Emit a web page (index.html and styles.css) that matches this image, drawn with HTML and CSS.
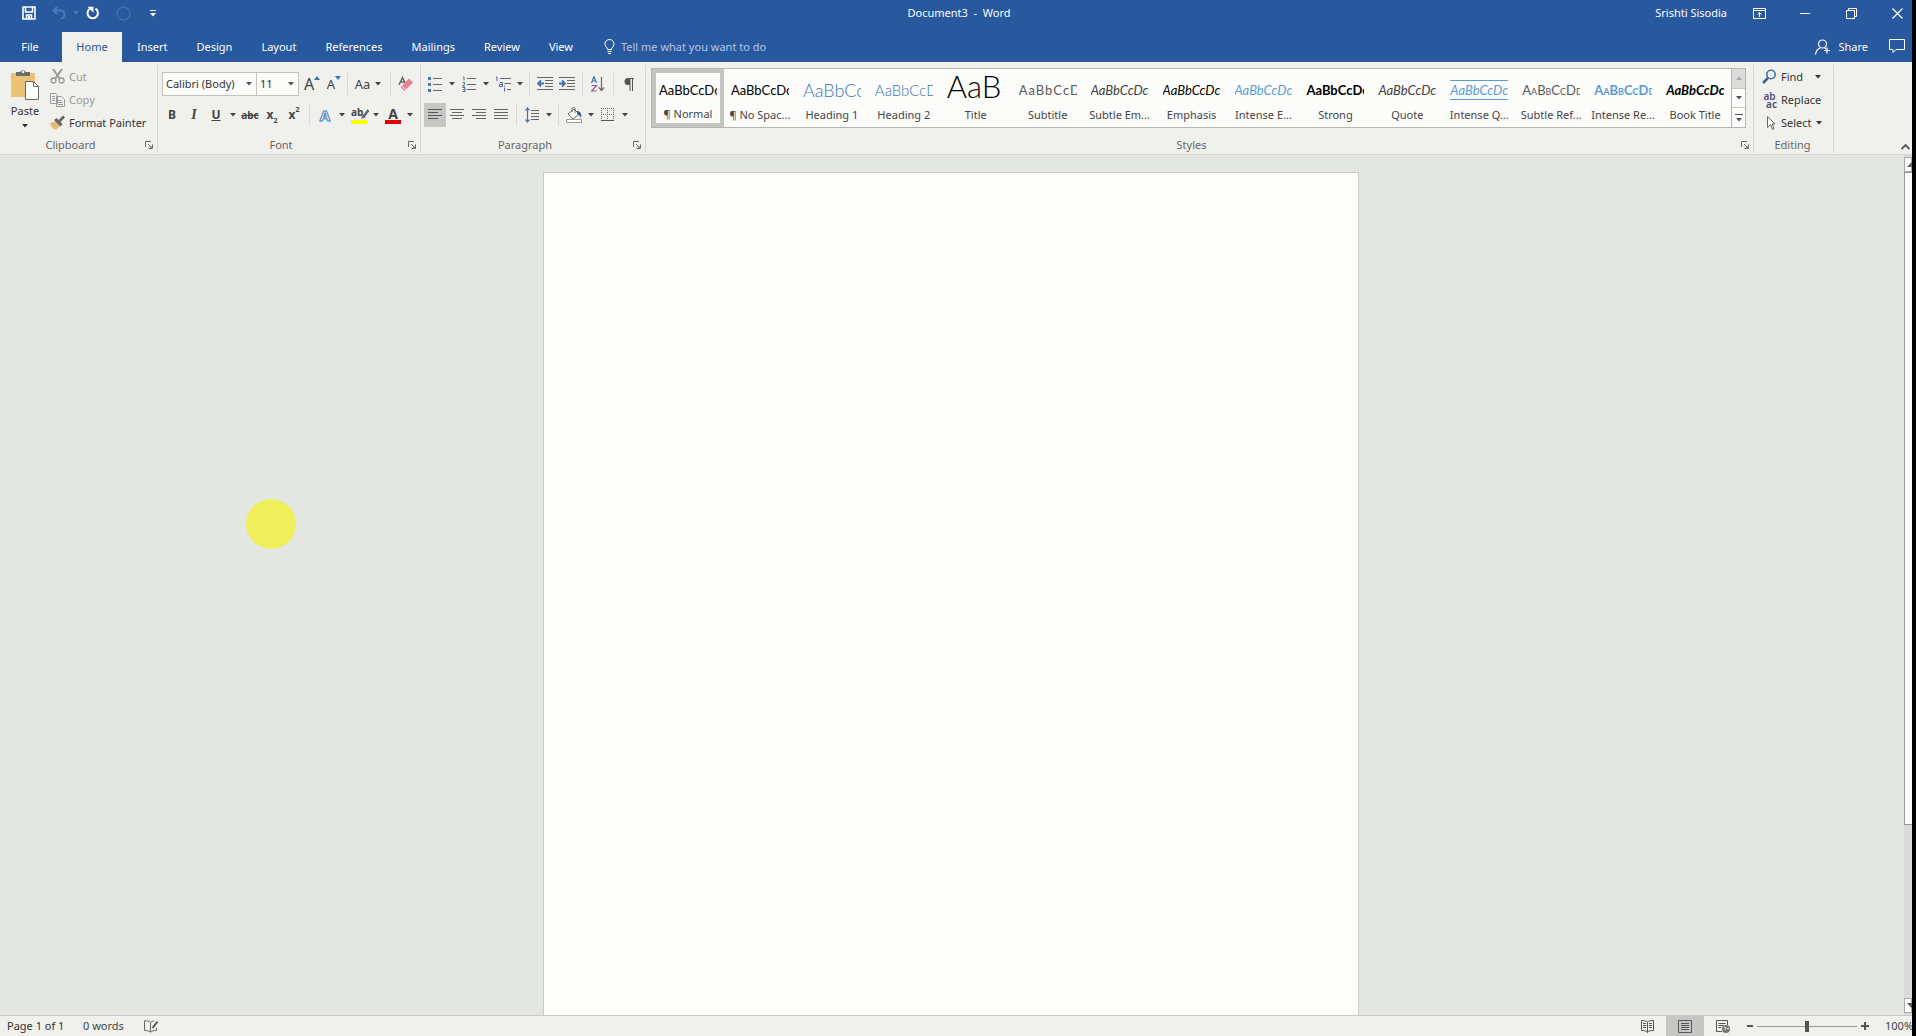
FILE: index.html
```html
<!DOCTYPE html>
<html lang="en">
<head>
<meta charset="utf-8">
<title>Document3 - Word</title>
<link rel="stylesheet" href="styles.css">
</head>
<body>
<svg class="defs" aria-hidden="true">
  <symbol id="launch" viewBox="0 0 8 8"><path d="M.5 6V.5H6M3 3l3 3M7.500 3.500v4h-4M5 7h2V5" fill="none" stroke="#666"/></symbol>
  <symbol id="down" viewBox="0 0 6 4"><path d="M0 0h6L3 3.500z" fill="currentColor"/></symbol>
</svg>
<header class="top">
  <div class="titlebar">
    <div class="quick">
      <button class="q" aria-label="Save"><svg width="14" height="14" viewBox="0 0 14 14"><path d="M1 1h12v12H1zM3.500 1v5h7V1M4.500 13V9h5v4" fill="none" stroke="#fff" stroke-width="1.600"/><path d="M6 10h2v3H6z" fill="#fff"/></svg></button>
      <button class="q dim" aria-label="Undo"><svg width="14" height="14" viewBox="0 0 14 14"><path d="M5 1L1.500 4.500 5 8M2 4.500h6.500a4 4 0 0 1 0 8" fill="none" stroke="currentColor" stroke-width="2"/></svg></button>
      <button class="q-caret dim" aria-label="Undo list"><svg width="6" height="4"><use href="#down"/></svg></button>
      <button class="q" aria-label="Repeat"><svg width="14" height="14" viewBox="0 0 14 14"><path d="M9.500 2.700A5.200 5.200 0 1 1 3.500 3" fill="none" stroke="#fff" stroke-width="2"/><path d="M1.500.8h6v6z" fill="#fff"/></svg></button>
      <button class="q dim" aria-label="Touch mode"><svg width="15" height="15" viewBox="0 0 15 15"><circle cx="7.500" cy="7.500" r="6.500" fill="none" stroke="currentColor"/></svg></button>
      <button class="q" aria-label="Customize toolbar"><svg width="6" height="7" viewBox="0 0 6 7"><path d="M0 0h6v1H0zM0 3h6L3 6.500z" fill="#fff"/></svg></button>
    </div>
    <h1>Document3&nbsp; -&nbsp; Word</h1>
    <div class="window">
      <span class="user">Srishti Sisodia</span>
      <button class="w" aria-label="Ribbon display"><svg width="13" height="11" viewBox="0 0 13 11"><path d="M.5.5h12v10H.5zM.5 2.500h12M6.500 9V4.500M4.500 6.500l2-2 2 2" fill="none" stroke="#fff"/></svg></button>
      <button class="w" aria-label="Minimize"><svg width="10" height="1"><path d="M0 0h10v1H0z" fill="#fff"/></svg></button>
      <button class="w" aria-label="Restore"><svg width="11" height="11" viewBox="0 0 11 11"><path d="M.5 2.500h8v8h-8zM2.500 2.500v-2h8v8h-2" fill="none" stroke="#fff"/></svg></button>
      <button class="w" aria-label="Close"><svg width="11" height="11" viewBox="0 0 11 11"><path d="M.5.5l10 10M10.500.5l-10 10" fill="none" stroke="#fff" stroke-width="1.200"/></svg></button>
    </div>
  </div>
  <nav class="tabs">
    <button class="file">File</button><button class="active">Home</button><button>Insert</button><button>Design</button><button>Layout</button><button>References</button><button>Mailings</button><button>Review</button><button>View</button>
    <label class="tell"><svg width="11" height="15" viewBox="0 0 11 15"><path d="M3.500 10.500C3.500 8.500 1 7.500 1 5a4.500 4.500 0 0 1 9 0c0 2.500-2.500 3.500-2.500 5.500zM3.500 12.500h4M4 14.500h3" fill="none" stroke="#fff"/></svg><input type="text" placeholder="Tell me what you want to do" aria-label="Tell me what you want to do"></label>
    <button class="share"><svg width="16" height="16" viewBox="0 0 16 16"><circle cx="7.500" cy="5" r="4" fill="none" stroke="#fff" stroke-width="1.200"/><path d="M.5 15.500c.5-3.500 2.500-6 5-6.500M12 8.500v6M9 11.500h6M9.500 8.700L11 10" fill="none" stroke="#fff" stroke-width="1.200"/></svg>Share</button>
    <button class="comment" aria-label="Comments"><svg width="17" height="15" viewBox="0 0 17 15"><path d="M.5.5h15v10H7l-3 3v-3H.500z" fill="none" stroke="#fff"/></svg></button>
  </nav>
</header>

<section class="ribbon">
  <div class="group clipboard">
    <div class="body">
      <button class="paste"><svg width="30" height="31" viewBox="0 0 30 31"><path d="M1 4h24v24H1z" fill="#ecc274"/><path d="M6 3h4a3.500 3.500 0 0 1 6 0h4v4H6z" fill="#6b6b6b"/><circle cx="13" cy="3" r="1.300" fill="#eee"/><path d="M15.500 12.500h8l5 5v13h-13z" fill="#fff" stroke="#666"/><path d="M23.500 12.500v5h5" fill="none" stroke="#666"/></svg><span>Paste</span><svg width="6" height="4"><use href="#down"/></svg></button>
      <div class="stack">
        <button class="off"><svg width="15" height="15" viewBox="0 0 15 15"><path d="M3 0l7 10M12 0L5 10" stroke="#999" stroke-width="2"/><circle cx="3.500" cy="11.500" r="2.500" fill="none" stroke="#999" stroke-width="1.300"/><circle cx="11.500" cy="11.500" r="2.500" fill="none" stroke="#999" stroke-width="1.300"/></svg>Cut</button>
        <button class="off"><svg width="15" height="15" viewBox="0 0 15 15"><path d="M.5 1.500h5l2 2v8h-7zM6.500 4.500h5l3 3v7h-8z" fill="#f4f4f4" stroke="#999"/><path d="M2 4.500h3M2 6.500h3M2 8.500h3M8 8.500h4M8 10.500h5M8 12.500h5" stroke="#999"/></svg>Copy</button>
        <button><svg width="15" height="15" viewBox="0 0 15 15"><path d="M0 8l6-2 4 5-4 4c-3-1-5-3-6-7z" fill="#ecb878"/><path d="M4 5l2.500-2 6 6-2 2.500z" fill="#666"/><path d="M8.500 5L13 .5l2 2L10.500 7z" fill="#666"/></svg>Format Painter</button>
      </div>
    </div>
    <div class="caption"><span>Clipboard</span><button aria-label="Clipboard options"><svg width="8" height="8"><use href="#launch"/></svg></button></div>
  </div>

  <div class="group font">
    <div class="body rows">
      <div class="row">
        <select class="face" aria-label="Font"><option>Calibri (Body)</option></select><select class="size" aria-label="Font size"><option>11</option></select>
        <button class="tool grow" aria-label="Grow font"><span class="g16">A</span><svg width="6" height="4" viewBox="0 0 6 4"><path d="M0 4h6L3 0z" fill="#3f72ad"/></svg></button>
        <button class="tool grow" aria-label="Shrink font"><span class="g13">A</span><svg width="6" height="4" viewBox="0 0 6 4"><path d="M0 0h6L3 4z" fill="#3f72ad"/></svg></button>
        <i class="sep"></i>
        <button class="tool wide" aria-label="Change case"><span class="g13">Aa</span><svg width="6" height="4"><use href="#down"/></svg></button>
        <i class="sep"></i>
        <button class="tool" aria-label="Clear formatting"><svg width="16" height="16" viewBox="0 0 16 16"><path d="M1 9L4.500 1.500 7 7M2.500 6h4" fill="none" stroke="#666" stroke-width="1.500"/><path d="M11 2.500l4 4-7 7-4-4z" fill="#e87f93"/><path d="M3.500 10l4 4-1 1-4-4z" fill="#e87f93"/></svg></button>
      </div>
      <div class="row">
        <button class="tool b">B</button><button class="tool it">I</button><button class="tool u">U</button><button class="caret" aria-label="Underline style"><svg width="6" height="4"><use href="#down"/></svg></button>
        <button class="tool strike">abc</button><button class="tool b">x<sub>2</sub></button><button class="tool b">x<sup>2</sup></button>
        <i class="sep"></i>
        <button class="tool" aria-label="Text effects"><span class="effect">A</span></button><button class="caret" aria-label="Effects list"><svg width="6" height="4"><use href="#down"/></svg></button>
        <button class="tool" aria-label="Highlight"><span class="mark">ab<svg width="9" height="10" viewBox="0 0 9 10"><path d="M8.500 1L4 7" stroke="#666" stroke-width="2.500"/><path d="M3 5l3 3-5 2z" fill="#666"/></svg></span></button><button class="caret" aria-label="Highlight colors"><svg width="6" height="4"><use href="#down"/></svg></button>
        <button class="tool" aria-label="Font color"><span class="ink">A</span></button><button class="caret" aria-label="Font colors"><svg width="6" height="4"><use href="#down"/></svg></button>
      </div>
    </div>
    <div class="caption"><span>Font</span><button aria-label="Font options"><svg width="8" height="8"><use href="#launch"/></svg></button></div>
  </div>

  <div class="group para">
    <div class="body rows">
      <div class="row">
        <button class="tool" aria-label="Bullets"><svg width="14" height="15" viewBox="0 0 14 15"><path d="M0 0h3v3H0zM0 6h3v3H0zM0 12h3v3H0z" fill="#4a7ab0"/><path d="M5 1.500h9M5 7.500h9M5 13.500h9" stroke="#666"/></svg></button><button class="caret" aria-label="Bullet library"><svg width="6" height="4"><use href="#down"/></svg></button>
        <button class="tool" aria-label="Numbering"><svg width="14" height="16" viewBox="0 0 14 16"><path d="M1 1h1v3.500M.5 6.500h2v1.500l-2 2h2.500M.5 11.500h2.500v4H.5M1 13.500h2" fill="none" stroke="#4a6a92"/><path d="M5 2.500h9M5 8.500h9M5 13.500h9" stroke="#666"/></svg></button><button class="caret" aria-label="Number library"><svg width="6" height="4"><use href="#down"/></svg></button>
        <button class="tool" aria-label="Multilevel list"><svg width="16" height="16" viewBox="0 0 16 16"><path d="M1 1h1v4M4.500 6.500h3v4h-3v-2h3M9.500 11.500v4M9.500 9.500v1" fill="none" stroke="#4a6a92"/><path d="M5 2.500h11M9.500 7.500H16M12 13.500h4" stroke="#666"/></svg></button><button class="caret" aria-label="List library"><svg width="6" height="4"><use href="#down"/></svg></button>
        <i class="sep"></i>
        <button class="tool" aria-label="Decrease indent"><svg width="16" height="14" viewBox="0 0 16 14"><path d="M0 .5h16M8 3.500h8M8 6.500h8M8 9.500h8M0 12.500h16" stroke="#666"/><path d="M7 6.500H1M4 3.500l-3 3 3 3" fill="none" stroke="#3f72ad" stroke-width="1.800"/></svg></button>
        <button class="tool" aria-label="Increase indent"><svg width="16" height="14" viewBox="0 0 16 14"><path d="M0 .5h16M8 3.500h8M8 6.500h8M8 9.500h8M0 12.500h16" stroke="#666"/><path d="M0 6.500h6M3 3.500l3 3-3 3" fill="none" stroke="#3f72ad" stroke-width="1.800"/></svg></button>
        <i class="sep"></i>
        <button class="tool" aria-label="Sort"><svg width="14" height="16" viewBox="0 0 14 16"><path d="M.5 7L3 .5 5.500 7M1.500 5h3" fill="none" stroke="#3f72ad" stroke-width="1.200"/><path d="M.5 9.500h5l-5 5.500h5" fill="none" stroke="#8a5a9a" stroke-width="1.200"/><path d="M10.500 1v13M8 11.500l2.500 3 2.500-3" fill="none" stroke="#666" stroke-width="1.200"/></svg></button>
        <i class="sep"></i>
        <button class="tool" aria-label="Show marks"><svg width="10" height="13" viewBox="0 0 10 13"><path d="M4 0h6v1H9v12H8V1H6.500v12h-1V7H4a3.500 3.500 0 0 1 0-7z" fill="#555"/></svg></button>
      </div>
      <div class="row">
        <button class="tool on" aria-label="Align left"><svg width="14" height="12" viewBox="0 0 14 12"><path d="M0 .5h14M0 3.500h10M0 6.500h14M0 9.500h10" stroke="#555"/></svg></button><button class="tool" aria-label="Center"><svg width="14" height="12" viewBox="0 0 14 12"><path d="M0 .5h14M2 3.500h10M0 6.500h14M2 9.500h10" stroke="#666"/></svg></button><button class="tool" aria-label="Align right"><svg width="14" height="12" viewBox="0 0 14 12"><path d="M0 .5h14M4 3.500h10M0 6.500h14M4 9.500h10" stroke="#666"/></svg></button><button class="tool" aria-label="Justify"><svg width="14" height="12" viewBox="0 0 14 12"><path d="M0 .5h14M0 3.500h14M0 6.500h14M0 9.500h14" stroke="#666"/></svg></button>
        <i class="sep"></i>
        <button class="tool" aria-label="Line spacing"><svg width="14" height="16" viewBox="0 0 14 16"><path d="M2.500 1v14M.5 3.500L2.500 1l2 2.500M.5 12.500l2 2.500 2-2.500" fill="none" stroke="#3f72ad" stroke-width="1.200"/><path d="M6 3.500h8M6 6.500h8M6 9.500h8M6 12.500h8" stroke="#666"/></svg></button><button class="caret" aria-label="Spacing list"><svg width="6" height="4"><use href="#down"/></svg></button>
        <i class="sep"></i>
        <button class="tool" aria-label="Shading"><svg width="17" height="16" viewBox="0 0 17 16"><path d="M8 2l5 5-6 5-5-5z" fill="#fff" stroke="#666"/><path d="M6 5V1.500a1.500 1.500 0 0 1 3 0V6" fill="none" stroke="#666"/><path d="M11 4c3 0 5 2 4 7-1-2-2-3-4-4z" fill="#3f6288"/><path d="M.5 12.500h15v3H.500z" fill="#fff" stroke="#999"/></svg></button><button class="caret" aria-label="Shading colors"><svg width="6" height="4"><use href="#down"/></svg></button>
        <button class="tool" aria-label="Borders"><svg width="14" height="14" viewBox="0 0 14 14"><path d="M.5 0v13M6.500 0v13M12.500 0v13M0 .5h13M0 6.500h13" stroke="#666" stroke-dasharray="1 1"/><path d="M0 12.500h13" stroke="#555"/></svg></button><button class="caret" aria-label="Border list"><svg width="6" height="4"><use href="#down"/></svg></button>
      </div>
    </div>
    <div class="caption"><span>Paragraph</span><button aria-label="Paragraph options"><svg width="8" height="8"><use href="#launch"/></svg></button></div>
  </div>

  <div class="group styles">
    <div class="body">
      <div class="gallery">
        <button class="style picked"><span class="sample">AaBbCcDc</span><span class="name">¶ Normal</span></button>
        <button class="style"><span class="sample">AaBbCcDc</span><span class="name">¶ No Spac...</span></button>
        <button class="style"><span class="sample h1">AaBbCc</span><span class="name">Heading 1</span></button>
        <button class="style"><span class="sample h2">AaBbCcD</span><span class="name">Heading 2</span></button>
        <button class="style"><span class="sample title">AaB</span><span class="name">Title</span></button>
        <button class="style"><span class="sample sub">AaBbCcD</span><span class="name">Subtitle</span></button>
        <button class="style"><span class="sample ital grey">AaBbCcDc</span><span class="name">Subtle Em...</span></button>
        <button class="style"><span class="sample ital">AaBbCcDc</span><span class="name">Emphasis</span></button>
        <button class="style"><span class="sample ital blue">AaBbCcDc</span><span class="name">Intense E...</span></button>
        <button class="style"><span class="sample bold">AaBbCcDc</span><span class="name">Strong</span></button>
        <button class="style"><span class="sample ital grey">AaBbCcDc</span><span class="name">Quote</span></button>
        <button class="style"><span class="sample ital blue lined">AaBbCcDc</span><span class="name">Intense Q...</span></button>
        <button class="style"><span class="sample caps dim-text">AaBbCcDd</span><span class="name">Subtle Ref...</span></button>
        <button class="style"><span class="sample caps blue bold">AaBbCcDd</span><span class="name">Intense Re...</span></button>
        <button class="style"><span class="sample ital bold">AaBbCcDc</span><span class="name">Book Title</span></button>
        <div class="scroller"><button class="spent" aria-label="Previous styles"><svg width="6" height="4" viewBox="0 0 6 4"><path d="M0 4h6L3 0z" fill="#aaa"/></svg></button><button aria-label="Next styles"><svg width="6" height="4"><use href="#down"/></svg></button><button aria-label="All styles"><svg width="8" height="8" viewBox="0 0 8 8"><path d="M0 0h8v1H0zM1 4h6L4 7.500z" fill="#555"/></svg></button></div>
      </div>
    </div>
    <div class="caption"><span>Styles</span><button aria-label="Style options"><svg width="8" height="8"><use href="#launch"/></svg></button></div>
  </div>

  <div class="group editing">
    <div class="body">
      <div class="stack">
        <button><svg width="15" height="15" viewBox="0 0 15 15"><circle cx="9" cy="5.500" r="4.200" fill="none" stroke="#3f72ad" stroke-width="1.600"/><path d="M6 9l-5 5" stroke="#3f5f85" stroke-width="2.500"/></svg>Find<svg class="gap" width="6" height="4"><use href="#down"/></svg></button>
        <button><span class="swap"><b>ab</b><b>ac</b></span>Replace</button>
        <button><svg width="15" height="16" viewBox="0 0 15 16"><path d="M5.500 1.500v11l3-3 2 5 1.500-.8-2-4.700h3z" fill="#fff" stroke="#666"/></svg>Select<svg width="6" height="4"><use href="#down"/></svg></button>
      </div>
    </div>
    <div class="caption"><span>Editing</span></div>
  </div>
  <button class="collapse" aria-label="Collapse ribbon"><svg width="9" height="6" viewBox="0 0 9 6"><path d="M.5 5l4-4 4 4" fill="none" stroke="#555" stroke-width="1.800"/></svg></button>
</section>

<main class="desk">
  <div class="canvas"><article class="sheet" aria-label="Page 1"></article><div class="spot"></div></div>
  <div class="scrollbar">
    <button aria-label="Scroll up"><svg width="9" height="5" viewBox="0 0 9 5"><path d="M0 5h9L4.500 0z" fill="#666"/></svg></button>
    <div class="thumb"></div><div class="rest"></div>
    <button aria-label="Scroll down"><svg width="9" height="5" viewBox="0 0 9 5"><path d="M0 0h9L4.500 5z" fill="#555"/></svg></button>
  </div>
</main>

<footer class="status">
  <span class="pages">Page 1 of 1</span><span class="words">0 words</span>
  <button aria-label="Proofing"><svg width="15" height="13" viewBox="0 0 15 13"><path d="M6.500 2.500C5 1 3 .8.500.8v9.700c2.500 0 4.500.2 6 1.700 1.500-1.500 3-1.700 6-1.700V8M6.500 2.500v9.700M6.500 2.500C7.500 1.500 8.500 1 10 .8" fill="none" stroke="#666"/><path d="M13.500 1.500L8.500 8" stroke="#555" stroke-width="2"/></svg></button>
  <div class="views">
    <button aria-label="Read mode"><svg width="13" height="13" viewBox="0 0 13 13"><path d="M6.500 2C5 .8 3 .5.500.5v10c2.500 0 4.500.3 6 1.500 1.500-1.200 3.500-1.500 6-1.500V.5c-2.500 0-4.500.3-6 1.500zM6.500 2v11M2 3.500h3M2 5.500h3M2 7.500h3M8 3.500h3M8 5.500h3M8 7.500h3" fill="none" stroke="#555"/></svg></button>
    <button class="on" aria-label="Print layout"><svg width="14" height="13" viewBox="0 0 14 13"><path d="M.5.5h13v12H.5zM3 3.500h8M3 5.500h8M3 7.500h8M3 9.500h8" fill="none" stroke="#555"/></svg></button>
    <button aria-label="Web layout"><svg width="14" height="13" viewBox="0 0 14 13"><path d="M6 11.500H.5V.5h11V5M2.500 3.500h7M2.500 5.500h5M2.500 7.500h3" fill="none" stroke="#555"/><circle cx="10" cy="9" r="4" fill="#777"/><path d="M8 7l2 1-1 2M11 9l2-1" stroke="#eee" fill="none"/></svg></button>
  </div>
  <button aria-label="Zoom out"><svg width="6" height="2"><path d="M0 0h6v2H0z" fill="#555"/></svg></button>
  <input type="range" min="10" max="190" value="100" aria-label="Zoom">
  <button aria-label="Zoom in"><svg width="8" height="8" viewBox="0 0 8 8"><path d="M0 3h3V0h2v3h3v2H5v3H3V5H0z" fill="#555"/></svg></button>
  <button class="percent">100%</button>
</footer>
</body>
</html>
```
FILE: styles.css
```css
* { box-sizing: border-box; }
html { background: #000; }
body {
  margin: 0 4px 0 0;
  min-height: 100vh;
  display: flex;
  flex-direction: column;
  overflow: hidden;
  background: #f0f1ed;
  color: #444;
  font: 11px/16px "Noto Sans", "Open Sans", sans-serif;
}
button, select, input { font: inherit; color: inherit; margin: 0; }
button {
  display: flex;
  align-items: center;
  justify-content: center;
  flex: none;
  padding: 0;
  border: 0;
  background: none;
  white-space: nowrap;
}
svg { display: block; flex: none; }
.defs { position: absolute; width: 0; height: 0; }

/* title bar and tabs */
.top { background: #28589d; color: #fff; }
.titlebar {
  display: grid;
  grid-template-columns: 1fr auto 1fr;
  align-items: center;
  height: 26px;
  padding-left: 6px;
}
.titlebar h1 { margin: 0; font-size: 11px; font-weight: 400; }
.quick { display: flex; align-items: center; padding-left: 8px; }
.q { width: 30px; height: 26px; }
.q-caret { width: 4px; }
.dim { color: #4d79b8; }
.window { display: flex; align-items: center; justify-content: flex-end; }
.user { margin-right: 9px; }
.w { width: 46px; height: 26px; }
.w:last-child { width: 38px; padding-left: 8px; }
.tabs { display: flex; gap: 1px; height: 36px; padding-top: 6px; }
.tabs button { padding: 0 14px 1px; }
.tabs .file { width: 61px; padding-right: 15px; }
.tabs .active { width: 60px; background: #f0f1ed; color: #2b579a; }
.tell { display: flex; align-items: center; gap: 6px; flex: 1; margin-left: 16px; padding-bottom: 1px; }
.tell input { width: 240px; padding: 0; border: 0; background: none; }
.tell input::placeholder { color: #b4c7e3; opacity: 1; }
.tabs .share { gap: 7px; padding-right: 20px; }
.tabs .comment { padding: 0 6px 1px 0; }

/* ribbon */
.ribbon { display: flex; height: 93px; padding-top: 3px; border-bottom: 1px solid #d8d9d5; }
.group { display: flex; flex-direction: column; height: 88px; border-right: 1px solid #d5d5d2; }
.group .body { flex: 1; display: flex; }
.caption { display: flex; align-items: center; height: 16px; padding-right: 4px; color: #666; }
.caption span { flex: 1; padding-right: 4px; text-align: center; }
.clipboard { width: 158px; }
.font { width: 263px; }
.para { width: 225px; }
.styles { flex: 1; min-width: 0; }
.editing { width: 80px; }
.editing .caption { padding-left: 6px; }
.collapse { width: 78px; align-items: flex-end; justify-content: flex-end; padding: 0 2px 4px 0; }
.paste { flex-direction: column; justify-content: flex-start; width: 50px; padding-top: 4px; color: #333; }
.paste span { margin: 3px 0 5px; }
.stack { display: flex; flex-direction: column; }
.stack button { height: 23px; gap: 4px; justify-content: flex-start; color: #333; }
.stack .off { color: #999; }
.stack .gap { margin-left: 8px; }
.rows { flex-direction: column; gap: 7px; padding: 7px 3px 0; }
.row { display: flex; height: 24px; align-items: center; }
.tool { width: 22px; height: 24px; }
.wide { width: 36px; gap: 5px; }
.caret { width: 11px; height: 24px; }
.caret + .tool { margin-left: 1px; }
.on { background: #c6c7c4; }
.sep { width: 1px; height: 22px; margin: 0 4px; background: #dadad7; }
.grow + .sep { margin: 0 2px; }
select {
  appearance: none;
  height: 24px;
  padding: 0 3px;
  border: 1px solid #c3c4c1;
  border-radius: 0;
  background: #fcfdfa url("data:image/svg+xml,%3Csvg xmlns='http://www.w3.org/2000/svg' width='6' height='4'%3E%3Cpath d='M0 0h6L3 3.500z' fill='%23555'/%3E%3C/svg%3E") no-repeat right 4px center;
  color: #333;
}
.face { width: 95px; margin-left: 1px; }
.size { width: 43px; margin: 0 2px 0 -1px; }
.g16 { font-size: 16px; }
.g13 { font-size: 13px; }
.grow { align-items: center; }
.grow svg { align-self: flex-start; margin-top: 4px; }
.b { font-size: 12px; font-weight: 700; }
.b sub, .b sup { font-size: 7px; line-height: 8px; }
.b sub { align-self: flex-end; margin-bottom: 2px; }
.b sup { align-self: flex-start; margin-top: 3px; }
.it { font: italic 700 14px "Liberation Serif", serif; }
.u { font-size: 12px; font-weight: 700; text-decoration: underline; }
.strike { font-size: 10px; font-weight: 700; text-decoration: line-through; }
.effect { font-size: 15px; font-weight: 700; color: #f3f7fb; -webkit-text-stroke: 1px #4a7fb8; }
.mark { display: flex; width: 16px; height: 18px; border-bottom: 4px solid #ff0; font-size: 10px; font-weight: 700; line-height: 12px; }
.mark svg { margin-left: -3px; margin-top: 3px; }
.ink { width: 16px; height: 17px; border-bottom: 4px solid #e00000; font-size: 14px; font-weight: 700; line-height: 14px; }

/* style gallery */
.gallery { display: flex; flex: 1; min-width: 0; height: 60px; margin: 3px 7px 0 5px; border: 1px solid #b5b6b3; background: #fcfdfb; }
.style { flex: 1; min-width: 0; height: 58px; flex-direction: column; align-items: stretch; justify-content: flex-start; padding: 7px 7px 0; }
.picked { padding: 3px 3px 0; border: 4px solid #c4c5c3; }
.sample { display: block; height: 30px; overflow: hidden; color: #000; font: 13px/28px Lato, sans-serif; text-align: left; }
.name { height: 18px; margin: 0 -5px; line-height: 18px; text-align: center; }
.sample.h1 { color: #3a78ad; font-size: 18px; font-weight: 300; }
.sample.h2 { color: #3a78ad; font-size: 15px; font-weight: 300; }
.sample.title { font-size: 31px; font-weight: 300; line-height: 20px; }
.sample.sub { color: #5a5a5a; letter-spacing: 1px; }
.sample.bold { font-weight: 700; }
.sample.ital { font-style: italic; }
.sample.grey { color: #404040; }
.sample.blue { color: #5b9bd5; }
.sample.caps { font-variant: small-caps; }
.sample.dim-text { color: #5a5a5a; }
.sample.lined { height: 20px; margin: 4px 0 6px; line-height: 18px; border: solid #5b9bd5; border-width: 1px 0; }
.scroller { display: flex; flex-direction: column; width: 14px; border-left: 1px solid #b5b6b3; }
.scroller button { flex: 1; border-top: 1px solid #c8c8c5; color: #555; }
.scroller .spent { border-top: 0; background: #dcdddb; }
.editing .stack { padding-left: 8px; }
.swap { display: flex; flex-direction: column; width: 15px; font-size: 10px; line-height: 8px; color: #5b4a7c; }
.swap b { font-weight: 600; }
.swap b + b { padding-left: 4px; color: #4a4a6a; }

/* document area */
.desk { flex: 1; display: flex; min-height: 400px; background: #e4e6e2; }
.canvas { position: relative; flex: 1; display: flex; justify-content: center; padding: 17px 2px 0 0; }
.sheet { width: 816px; border: 1px solid #c9cbc8; border-bottom: 0; background: #fdfefb; }
.spot { position: absolute; left: 246px; top: 344px; width: 50px; height: 50px; border-radius: 50%; background: #efef5c; }
.scrollbar { display: flex; flex-direction: column; width: 8px; padding: 2px 0; overflow: hidden; background: #dadbd9; }
.scrollbar button { height: 15px; border: 1px solid #aaa; justify-content: flex-start; padding-left: 2px; background: #fcfdfa; }
.thumb { flex: 79; border: solid #999; border-width: 1px 0 1px 1px; background: #fcfdfa; }
.rest { flex: 21; }

/* status bar */
.status { display: flex; align-items: center; height: 21px; padding-left: 7px; border-top: 1px solid #c9cac6; white-space: nowrap; }
.pages { width: 76px; color: #333; }
.words { width: 61px; }
.views { display: flex; margin-left: auto; margin-right: 5px; }
.views button { width: 38px; height: 20px; }
.status input { appearance: none; width: 100px; height: 14px; margin: 0 4px; background: linear-gradient(#999, #999) center / 100% 1px no-repeat; }
.status input::-webkit-slider-thumb { appearance: none; width: 4px; height: 11px; background: #555; }
.percent { margin-left: 16px; width: 27px; justify-content: flex-start; overflow: hidden; }
```
